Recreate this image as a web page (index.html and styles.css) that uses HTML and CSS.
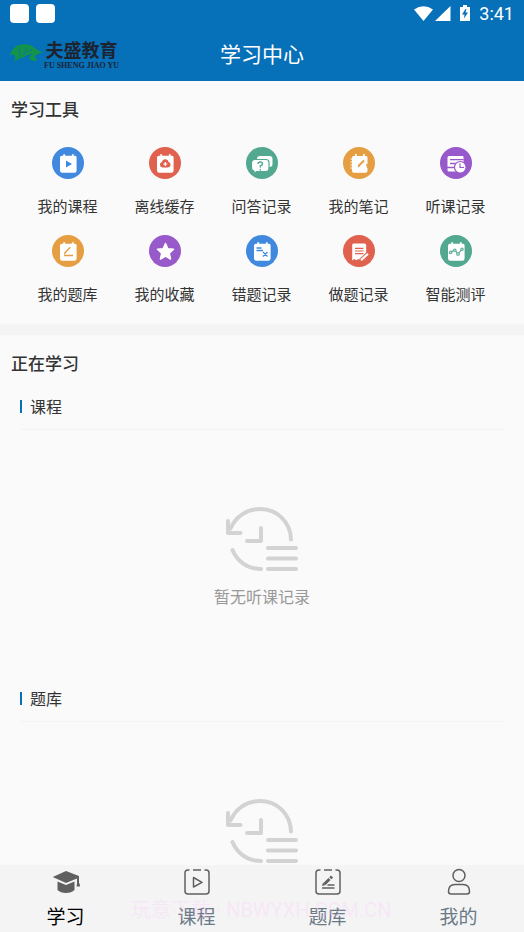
FILE: index.html
```html
<!DOCTYPE html>
<html lang="zh-CN">
<head>
<meta charset="utf-8">
<meta name="viewport" content="width=device-width, initial-scale=1">
<title>学习中心</title>
<link rel="stylesheet" href="styles.css">
</head>
<body>
<svg class="defs" aria-hidden="true">
  <symbol id="pad" viewBox="0 0 32 32">
    <path fill="#fff" d="M10 8.700h1.300V7.200h1.800v1.500h6.800V7.200h1.800v1.500H23q1.600 0 1.600 1.600v13.200q0 2.200-2.200 2.200H10.200q-2.200 0-2.200-2.200V10.300q0-1.600 2-1.600z"/>
  </symbol>
  <symbol id="history" viewBox="0 0 72 64">
    <g fill="none" stroke="#d3d3d3" stroke-width="4" stroke-linecap="round" stroke-linejoin="round">
      <path d="M4.500 21.500C10 9 21 2 34 2c17 0 30.500 13 31 30.500M6.500 43C11 54 21 62 35 62"/>
      <path d="M2 14v12h12.500M35 21v13H21M42 41h28M42 51.500h28M42 62h28"/>
    </g>
  </symbol>
</svg>

<header class="header">
  <div class="status">
    <span class="status-box"></span><span class="status-box"></span>
    <svg class="signal" viewBox="0 0 58 18" width="58" height="18" fill="#fff" aria-hidden="true">
      <path d="M0 4.500Q9.500-2 19 4.500L9.500 16z"/>
      <path d="M36.500 1v15H21z"/>
      <path fill-rule="evenodd" d="M46 2h3V0h4v2h3v14H46zM51.500 4L48 9.500h2.500l-.5 4 4-6h-2.500l1-3.500z"/>
    </svg>
    <span class="clock">3:41</span>
  </div>
  <div class="titlebar">
    <a class="logo" href="#" aria-label="夫盛教育">
      <svg viewBox="0 0 34 22" width="34" height="22" aria-hidden="true">
        <path fill="#139447" d="M0 13Q3 3 12 2.500q8-1 12 3 4 3 9 5.500-5 0-8 3-2 2 2 2l-1 3q-6 0-7-3 1-3 4-4-6 0-9 3-5 1-10 5 2-4 1-6-1-2-5-1z"/>
        <path fill="none" stroke="#0670b8" stroke-width=".8" d="M9 5l1 10M13 12l4-7M14 13q3-5 8-5"/>
      </svg>
      <span class="logo-text"><span class="logo-name">夫盛教育</span><span class="logo-latin">FU SHENG JIAO YU</span></span>
    </a>
    <h1>学习中心</h1>
  </div>
</header>

<main class="content">
  <section class="panel">
    <h2>学习工具</h2>
    <div class="tools">
      <a class="tool" href="#"><svg class="badge blue" viewBox="0 0 32 32"><use href="#pad"/><path fill="#4089df" d="M14 13.500l6 3.500-6 3.500z"/></svg>我的课程</a>
      <a class="tool" href="#"><svg class="badge red" viewBox="0 0 32 32"><use href="#pad"/><path fill="#df614e" d="M13.500 20.500a2.800 2.800 0 0 1-.5-5.500 3.300 3.300 0 0 1 6.500 0 2.800 2.800 0 0 1-.5 5.500z"/><path stroke="#fff" stroke-width="1.200" d="M16.300 15v4M14.300 17h4"/></svg>离线缓存</a>
      <a class="tool" href="#"><svg class="badge green" viewBox="0 0 32 32"><rect x="11" y="9" width="15.500" height="11" rx="3" fill="#fff"/><path fill="#fff" stroke="#53a890" stroke-width="1.200" d="M9 12.500h11q3 0 3 3v6q0 3-3 3h-9.500L7.500 27l.5-3q-2.500-.5-2.500-3v-5q0-3.500 3.500-3.500z"/><path fill="none" stroke="#53a890" stroke-width="1.400" d="M12 17q0-2 2.300-2t2.200 2q0 1-2.200 2v1.600M14.300 22v1.500"/></svg>问答记录</a>
      <a class="tool" href="#"><svg class="badge orange" viewBox="0 0 32 32"><path fill="#fff" d="M10.500 9H12V7h1.700v2H20V7h1.700v2H23q1.500 0 1.500 1.700V24q0 1.800-1.800 1.800H11Q9 25.800 9 24V10.500Q9 9 10.500 9z"/><path stroke="#fff" stroke-width="1.200" d="M7.500 12H10M7.500 15H10M7.500 18H10M7.500 21H10"/><path stroke="#e69e42" stroke-width="2" d="M15.500 19l5.500-5.500"/><path fill="#e69e42" d="M14.500 20.500l.8-2.300 1.500 1.400zM23 17h2v4h-1z"/></svg>我的笔记</a>
      <a class="tool" href="#"><svg class="badge purple" viewBox="0 0 32 32"><path fill="#fff" d="M9 9h13.500q1 0 1 1v14.500H9Q7.500 24.500 7.500 23V10.500Q7.500 9 9 9z"/><path stroke="#9859ca" stroke-width="1.300" d="M10 12.700h13.500M10 16.500h6M7 20.500h7"/><circle cx="20.300" cy="20.300" r="5.800" fill="#fff" stroke="#9859ca" stroke-width="1.200"/><path fill="none" stroke="#9859ca" stroke-width="1.200" d="M20 16.500v4h4"/></svg>听课记录</a>
      <a class="tool" href="#"><svg class="badge orange" viewBox="0 0 32 32"><use href="#pad"/><path fill="none" stroke="#e69e42" stroke-width="1.400" d="M12 20.500h9M12.800 18l5.500-5.800"/><path fill="#e69e42" d="M12 19.500l.5-2.200 1.600 1.500z"/></svg>我的题库</a>
      <a class="tool" href="#"><svg class="badge purple" viewBox="0 0 32 32"><path fill="#fff" stroke="#fff" stroke-width="1.500" stroke-linejoin="round" d="M16.500 8.500l2.400 5.200 5.600.6-4.200 3.900 1.200 5.800-5-2.900-5 2.900 1.200-5.800-4.200-3.900 5.600-.6z"/></svg>我的收藏</a>
      <a class="tool" href="#"><svg class="badge blue" viewBox="0 0 32 32"><use href="#pad"/><path fill="none" stroke="#4089df" stroke-width="1.300" d="M10.500 13h5M10.500 15.500h6.500M17 17l4.500 4.500M21.500 17L17 21.500"/></svg>错题记录</a>
      <a class="tool" href="#"><svg class="badge red" viewBox="0 0 32 32"><path fill="#fff" d="M10.500 8.500h11q1.700 0 1.700 1.700V24l-2 1.200-2-1.200-2 1.200-2-1.200-2 1.200-2-1.200-2 1.500V10.200q0-1.700 1.300-1.700z"/><path stroke="#df614e" stroke-width="1.200" d="M12 13.300h8.500M12 16h8.500M12 18.700h8.500"/><path stroke="#df614e" stroke-width="4.500" d="M17.500 26l8-7.500"/><path stroke="#fff" stroke-width="2.200" d="M18 25.200l7-6.500"/></svg>做题记录</a>
      <a class="tool" href="#"><svg class="badge green" viewBox="0 0 32 32"><use href="#pad"/><g fill="#fff" stroke="#53a890" stroke-width="1.100"><path fill="none" d="M9 18.500l2-1.500 4-2 3 4 4-5"/><circle cx="10.800" cy="17.200" r="1.200"/><circle cx="14.800" cy="15.200" r="1.200"/><circle cx="18" cy="19" r="1.300"/><circle cx="22" cy="14.200" r="1.200"/></g></svg>智能测评</a>
    </div>
  </section>

  <section class="panel">
    <h2>正在学习</h2>
    <div class="group">
      <h3>课程</h3>
      <div class="empty"><svg width="72" height="64" aria-hidden="true"><use href="#history"/></svg><p>暂无听课记录</p></div>
    </div>
    <div class="group">
      <h3>题库</h3>
      <div class="empty"><svg width="72" height="64" aria-hidden="true"><use href="#history"/></svg></div>
    </div>
  </section>
</main>

<nav class="tabs">
  <a class="tab active" href="#"><svg viewBox="0 0 28 28"><path fill="#606060" d="M14 3L27 8v7.500h.7l.3 3h-3.500l.5-3V10.500L14 15 .7 9z"/><path fill="#606060" d="M5.500 13.500L14 17l8.500-3.500V22q-3 3-8.500 3t-8.500-3z"/></svg>学习</a>
  <a class="tab" href="#"><svg viewBox="0 0 28 28"><g fill="none" stroke="#606060" stroke-width="1.500" stroke-linejoin="round"><path d="M6.500 2H5Q2 2 2 5v18q0 3 3 3h18q3 0 3-3V5q0-3-3-3h-1.500M10 2h8"/><path d="M10.500 9.500l8.500 4.800-8.500 4.700z"/></g></svg>课程</a>
  <a class="tab" href="#"><svg viewBox="0 0 28 28"><g fill="none" stroke="#606060" stroke-width="1.500"><path d="M6.500 2H5Q2 2 2 5v18q0 3 3 3h18q3 0 3-3V5q0-3-3-3h-1.500M10 2h8M8 20h12.500M13.500 17h7"/><path stroke-width="3" d="M10.500 16l5-5M16.300 10.200l1.700-1.700"/></g><path fill="#606060" d="M8 18l1-3.500 2.500 2.500z"/></svg>题库</a>
  <a class="tab" href="#"><svg viewBox="0 0 28 28"><g fill="none" stroke="#606060" stroke-width="1.500"><circle cx="14" cy="7.500" r="6"/><path d="M6 26q-2.500 0-2.500-2.500 0-7 6.500-7h8q6.500 0 6.500 7Q24.500 26 22 26z"/></g></svg>我的</a>
  <span class="watermark">玩意下载 · NBWYXH.COM.CN</span>
</nav>
</body>
</html>
```
FILE: styles.css
```css
* {
  box-sizing: border-box;
}

body {
  margin: 0;
  height: 100vh;
  display: flex;
  flex-direction: column;
  background: #fafafa;
  color: #333;
  font-family: "Noto Sans CJK SC", sans-serif;
}

h1, h2, h3, p {
  margin: 0;
  font-weight: 400;
}

a {
  color: inherit;
  text-decoration: none;
}

svg {
  display: block;
  flex: none;
}

.defs {
  position: absolute;
  width: 0;
  height: 0;
}

.header {
  flex: none;
  background: #0670b8;
  color: #fff;
}

.status {
  height: 27px;
  padding: 0 10px;
  display: flex;
  align-items: center;
  gap: 7px;
}

.status-box {
  width: 19px;
  height: 19px;
  border-radius: 4px;
  background: #fff;
}

.signal {
  margin-left: auto;
}

.clock {
  font: 400 18px/27px Roboto, sans-serif;
}

.titlebar {
  height: 54px;
  padding: 0 10px 2px;
  display: grid;
  grid-template-columns: 1fr auto 1fr;
  align-items: center;
}

.titlebar h1 {
  font-size: 21px;
  line-height: 32px;
}

.logo {
  display: flex;
  align-items: center;
  color: #1d2431;
}

.logo-text {
  display: flex;
  flex-direction: column;
  align-items: center;
}

.logo-name {
  font-size: 18px;
  line-height: 26px;
  font-weight: 700;
}

.logo-latin {
  font: 700 8px/8px "Liberation Serif", serif;
  white-space: nowrap;
}

.content {
  flex: 1;
  min-height: 0;
  overflow-y: auto;
  scrollbar-width: none;
}

.panel {
  padding: 16px 0;
}

.panel + .panel {
  border-top: 11px solid #f4f4f4;
}

.panel h2 {
  padding: 0 11px;
  font-size: 17px;
  line-height: 24px;
  font-weight: 500;
}

.tools {
  margin-top: 26px;
  padding: 0 20px 2px 19px;
  display: grid;
  grid-template-columns: repeat(5, 1fr);
  row-gap: 17px;
}

.tool {
  display: flex;
  flex-direction: column;
  align-items: center;
  gap: 15px;
  font-size: 15px;
  line-height: 24px;
}

.badge {
  width: 32px;
  height: 32px;
  border-radius: 50%;
}

.blue { background: #4089df; }
.red { background: #df614e; }
.green { background: #53a890; }
.orange { background: #e69e42; }
.purple { background: #9859ca; }

.group {
  margin: 0 20px;
}

.panel h2 + .group {
  margin-top: 19px;
}

.group h3 {
  display: flex;
  align-items: center;
  gap: 8px;
  padding-bottom: 11px;
  border-bottom: 1px solid #f3f3f3;
  font-size: 16px;
  line-height: 24px;
}

.group h3::before {
  content: "";
  width: 2px;
  height: 13px;
  background: #0670b8;
}

.empty {
  padding: 77px 0 78px;
  display: flex;
  flex-direction: column;
  align-items: center;
  gap: 13px;
  color: #999;
  font-size: 16px;
  line-height: 24px;
}

.tabs {
  position: relative;
  flex: none;
  height: 67px;
  display: grid;
  grid-template-columns: repeat(4, 1fr);
  background: #f4f4f4;
}

.tab {
  padding-top: 3px;
  display: flex;
  flex-direction: column;
  align-items: center;
  gap: 6px;
  color: #6a7a86;
  font-size: 19px;
  line-height: 28px;
}

.tab svg {
  width: 28px;
  height: 28px;
}

.tab.active {
  color: #000;
}

.watermark {
  position: absolute;
  left: 25%;
  top: 30px;
  color: rgba(255, 190, 255, 0.25);
  font-family: Roboto, "Noto Sans CJK SC", sans-serif;
  font-size: 20px;
  line-height: 30px;
  white-space: nowrap;
  pointer-events: none;
}
```
